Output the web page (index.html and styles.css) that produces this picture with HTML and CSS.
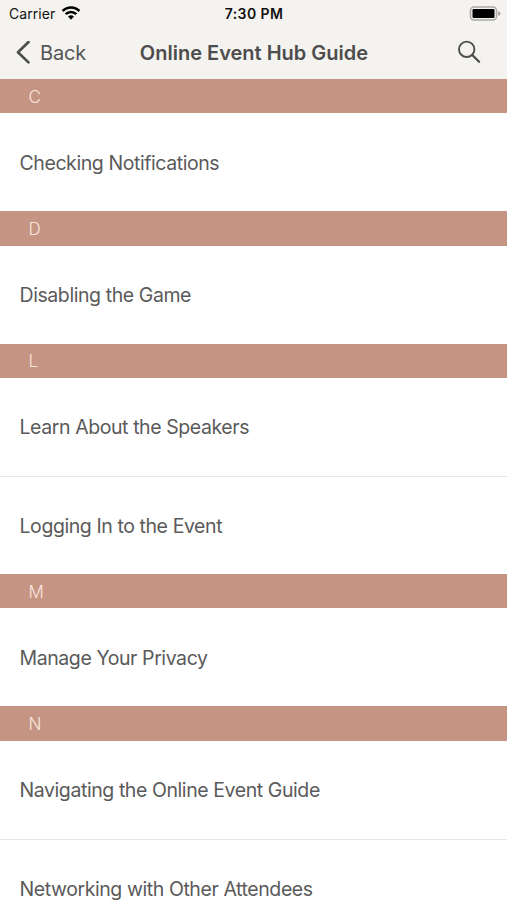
FILE: index.html
```
<!DOCTYPE html>
<html lang="en">
<head>
    <meta charset="UTF-8">
    <meta name="viewport" content="width=device-width, initial-scale=1.0">
    <title>Online Event Hub Guide</title>
    <link rel="stylesheet" href="styles.css">
</head>
<body>
    <header class="header">
        <div class="status">
            <div class="status-left">
                <span class="carrier">Carrier</span>
                <svg class="wifi" width="20" height="14" viewBox="0 0 20 14" fill="none" stroke="#000" stroke-width="2.5">
                    <path d="M1.6 5a11.9 11.9 0 0 1 16.8 0"/>
                    <path d="M4.7 8.1a7.5 7.5 0 0 1 10.6 0"/>
                    <path d="M7 10.6a4.3 4.3 0 0 1 6 0L10 13.7z" fill="#000" stroke="none"/>
                </svg>
            </div>
            <span class="time">7:30 PM</span>
            <svg class="battery" width="32" height="15" viewBox="0 0 32 15">
                <rect x="1.5" y="1" width="26" height="13" rx="3.5" fill="#f4f3ef" stroke="#aaa9a6" stroke-width="1.5"/>
                <rect x="3.5" y="3" width="22" height="9" rx="1.2" fill="#000"/>
                <path d="M29 5q2.5.8 2.5 2.5t-2.5 2.5z" fill="#aaa9a6"/>
            </svg>
        </div>
        <nav class="navbar">
            <a class="back">
                <svg width="16" height="24" viewBox="0 0 16 24" fill="none" stroke="#4d4d4d" stroke-width="2.7" stroke-linecap="round" stroke-linejoin="round">
                    <path d="M14.5 1L4 11.2l10.5 10.2"/>
                </svg>
                <span class="back-label">Back</span>
            </a>
            <h1 class="title">Online Event Hub Guide</h1>
            <svg class="search" width="24" height="24" viewBox="0 0 24 24" fill="none" stroke="#4d4d4d" stroke-linecap="round">
                <circle cx="9.7" cy="9.3" r="7.7" stroke-width="1.9"/>
                <path d="M15.5 15.2l6.6 6.6" stroke-width="2.3"/>
            </svg>
        </nav>
    </header>

    <main class="list">
        <h2 class="letter">C</h2>
        <div class="item">Checking Notifications</div>
        <h2 class="letter">D</h2>
        <div class="item">Disabling the Game</div>
        <h2 class="letter">L</h2>
        <div class="item">Learn About the Speakers</div>
        <div class="item">Logging In to the Event</div>
        <h2 class="letter">M</h2>
        <div class="item">Manage Your Privacy</div>
        <h2 class="letter">N</h2>
        <div class="item">Navigating the Online Event Guide</div>
        <div class="item">Networking with Other Attendees</div>
    </main>
</body>
</html>
```
FILE: styles.css
```
* {
    box-sizing: border-box;
}
body {
    margin: 0;
    height: 900px;
    overflow: hidden;
    background-color: #fff;
    color: #5a5a5a;
    font-family: Inter, "Liberation Sans", sans-serif;
}
.header {
    height: 79px;
    background-color: #f4f3ef;
}
.status {
    display: grid;
    grid-template-columns: 1fr auto 1fr;
    align-items: center;
    height: 27px;
    padding: 0 6px 0 9px;
    color: #111;
}
.status-left {
    display: flex;
    align-items: center;
    gap: 6px;
}
.carrier {
    font-size: 14px;
    letter-spacing: 0.05px;
}
.time {
    margin: 0 1px 0 -1px;
    font-size: 14px;
    font-weight: 600;
    letter-spacing: 0.4px;
}
.wifi {
    margin-top: -1px;
}
.battery {
    justify-self: end;
}
.navbar {
    display: grid;
    grid-template-columns: 1fr auto 1fr;
    align-items: center;
    height: 50px;
    padding: 0 26px 0 14px;
}
.back {
    display: flex;
    align-items: center;
    gap: 10px;
    padding-top: 1px;
    color: #555;
}
.back-label {
    font-size: 20px;
    letter-spacing: -0.2px;
}
.title {
    margin: 1px -6.5px 0 6.5px;
    font-size: 20px;
    font-weight: 600;
    letter-spacing: 0;
    color: #4d4d4d;
}
.search {
    justify-self: end;
}
.letter {
    display: flex;
    align-items: center;
    height: 34.2px;
    margin: 0;
    padding: 1px 0 0 28.5px;
    background-color: #c69483;
    color: #f8e6df;
    font-size: 17px;
    font-weight: 300;
}
.item {
    display: flex;
    align-items: center;
    height: 98.15px;
    padding: 1px 0 0 19.5px;
    font-size: 19.5px;
    letter-spacing: -0.42px;
    white-space: nowrap;
}
.item + .item {
    border-top: 1px solid #e6e6e6;
}
```
